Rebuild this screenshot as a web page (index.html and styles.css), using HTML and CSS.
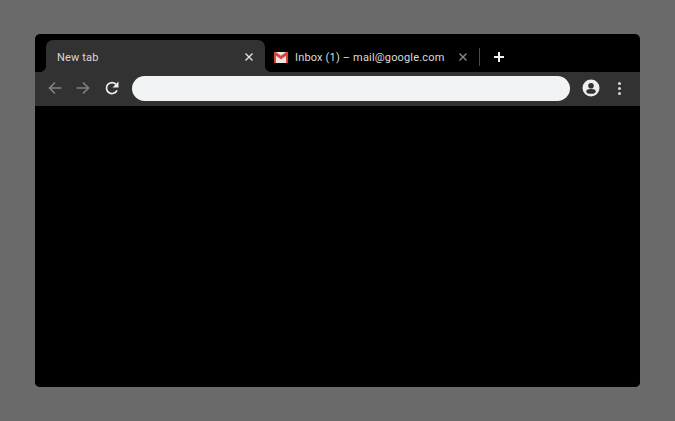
FILE: index.html
```html
<!DOCTYPE html>
<html>
  <head>
    <title>New tab</title>
    <link rel="stylesheet" href="styles.css">
  </head>
  <body>
    <div class="window">
      <div class="tab-strip">
        <div class="tab active">
          <span class="tab-title">New tab</span>
          <svg class="close" viewBox="0 0 10 10"><path d="M1.5 1.5l7 7M8.5 1.5l-7 7"/></svg>
        </div>
        <div class="tab inactive">
          <svg class="favicon" viewBox="0 0 14 11">
            <rect width="14" height="11" rx="1" fill="#f0e4e2"/>
            <path d="M0 1v10h2V3.700L7 7.200l5-3.500V11h2V1c0-.6-.4-1-1-1h-.8L7 3.800 1.800 0H1C.4 0 0 .4 0 1z" fill="#d6453b"/>
          </svg>
          <span class="tab-title">Inbox (1) – mail@google.com</span>
          <svg class="close" viewBox="0 0 10 10"><path d="M1.5 1.5l7 7M8.5 1.5l-7 7"/></svg>
        </div>
        <div class="tab-sep"></div>
        <svg class="new-tab" viewBox="0 0 12 12"><path d="M6 1v10M1 6h10"/></svg>
      </div>
      <div class="toolbar">
        <svg class="nav dim" viewBox="0 0 16 16"><path d="M14.500 8H2.500M8 2.500L2.500 8 8 13.500"/></svg>
        <svg class="nav dim" viewBox="0 0 16 16"><path d="M1.500 8h12M8 2.500L13.500 8 8 13.500"/></svg>
        <svg class="nav reload" viewBox="0 0 16 16">
          <path d="M13 10.300A5.500 5.500 0 1 1 12 4.300"/>
          <path class="solid" d="M14.500 1.500v6h-6z"/>
        </svg>
        <div class="omnibox"></div>
        <svg class="avatar" viewBox="0 0 18 18">
          <circle cx="9" cy="9" r="8.500" fill="#eeeeee"/>
          <circle cx="9" cy="6.800" r="2.800" fill="#333333"/>
          <ellipse cx="9" cy="12.400" rx="4.700" ry="2.300" fill="#333333"/>
        </svg>
        <div class="menu">
          <span></span>
          <span></span>
          <span></span>
        </div>
      </div>
      <div class="content"></div>
    </div>
  </body>
</html>
```

FILE: styles.css
```css
:root {
  --chrome-color: #323232;
  --bg-color: #6a6a6a;
}

html,
body {
  margin: 0;
  height: 100%;
}

body {
  background-color: var(--bg-color);
  padding: 34px 35px;
  box-sizing: border-box;
  font-family: Roboto, "Liberation Sans", sans-serif;
  overflow: hidden;
}

.window {
  width: 605px;
  height: 353px;
  background: #000;
  border-radius: 5px;
  overflow: hidden;
  display: flex;
  flex-direction: column;
}

.tab-strip {
  height: 32px;
  padding: 6px 0 0 11px;
  display: flex;
  align-items: center;
  flex-shrink: 0;
}

.tab {
  height: 32px;
  display: flex;
  align-items: center;
  box-sizing: border-box;
  font-size: 11px;
  letter-spacing: 0.17px;
}

.active {
  position: relative;
  width: 219px;
  padding: 2px 11px 0 11px;
  background: var(--chrome-color);
  border-radius: 7px 7px 0 0;
  color: #d8d8d8;
}

.active::before,
.active::after {
  content: "";
  position: absolute;
  bottom: 0;
  width: 7px;
  height: 7px;
}

.active::before {
  left: -7px;
  background: radial-gradient(circle at 0 0, transparent 7px, var(--chrome-color) 7.5px);
}

.active::after {
  right: -7px;
  background: radial-gradient(circle at 100% 0, transparent 7px, var(--chrome-color) 7.5px);
}

.inactive {
  width: 214px;
  padding: 2px 11px 0 9px;
  color: #dcdcdc;
}

.tab-title {
  flex: 1;
  white-space: nowrap;
}

.favicon {
  width: 14px;
  height: 11px;
  margin-right: 7px;
  flex-shrink: 0;
}

.close {
  width: 10px;
  height: 10px;
  flex-shrink: 0;
  fill: none;
  stroke: #e0e0e0;
  stroke-width: 1.4;
}

.inactive .close {
  stroke: #8a8a8a;
}

.tab-sep {
  width: 1px;
  height: 18px;
  margin-top: 2px;
  background: #4c4c4c;
}

.new-tab {
  width: 12px;
  height: 12px;
  margin: 2px 0 0 13px;
  fill: none;
  stroke: #f2f2f2;
  stroke-width: 2;
}

.toolbar {
  height: 34px;
  box-sizing: border-box;
  padding: 0 0 2px 12px;
  display: flex;
  align-items: center;
  background: var(--chrome-color);
  flex-shrink: 0;
}

.nav {
  width: 16px;
  height: 16px;
  margin-right: 12px;
  fill: none;
  stroke: #808080;
  stroke-width: 1.7;
  flex-shrink: 0;
}

.reload {
  margin: 0 0 0 1px;
  stroke: #eeeeee;
}

.reload .solid {
  fill: #eeeeee;
  stroke: none;
}

.omnibox {
  width: 438px;
  height: 25px;
  margin-left: 12px;
  border-radius: 13px;
  background: #f1f3f4;
  flex-shrink: 0;
}

.avatar {
  width: 18px;
  height: 18px;
  margin-left: 12px;
  flex-shrink: 0;
}

.menu {
  margin-left: 18px;
  display: flex;
  flex-direction: column;
  gap: 2px;
}

.menu span {
  width: 3px;
  height: 3px;
  border-radius: 50%;
  background: #d4d4d4;
}

.content {
  flex: 1;
  background: #000;
}
```
